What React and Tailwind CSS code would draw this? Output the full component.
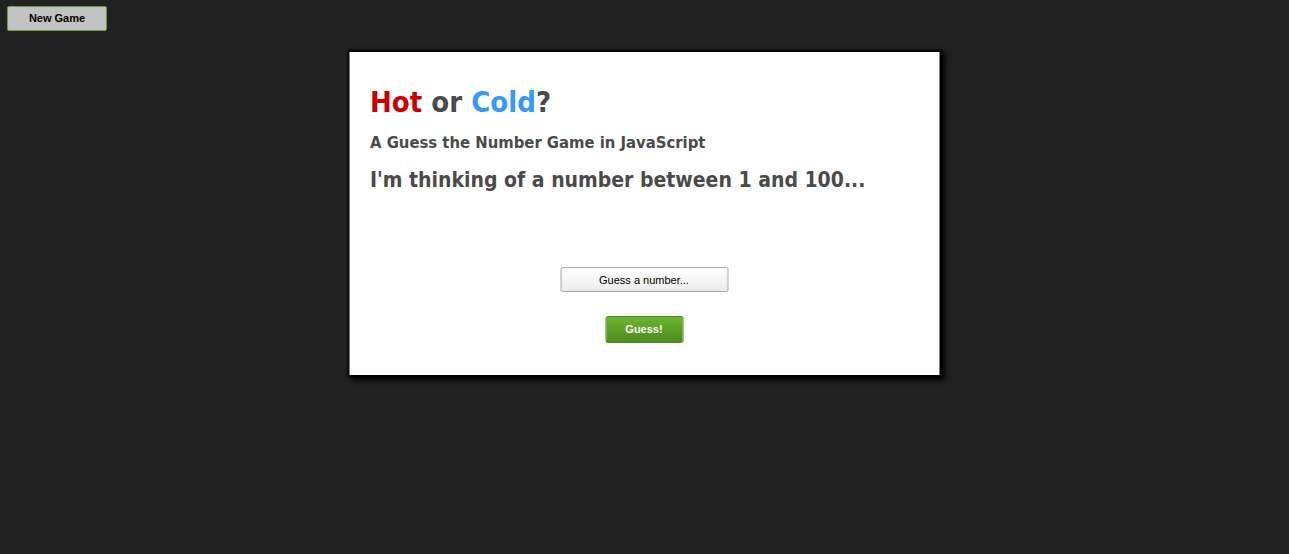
export default function App() {
  return (
    <div className="min-h-screen bg-[#222222]">
      <div className="pt-[6px] pl-[7px]">
        <button className="block h-[25px] w-[100px] rounded-[2px] border border-[#6f9a3a] bg-[#c2c2c2] text-[11px] font-bold text-black [font-family:'Liberation_Sans',Arial,sans-serif]">
          New Game
        </button>
      </div>

      <div className="mx-auto mt-[21px] h-[323px] w-[590px] -translate-x-[0.5px] bg-white px-[21px] pt-[30px] shadow-[0_0_2px_2px_#000,3px_3px_6px_2px_#000] [font-family:'DejaVu_Sans_Condensed','DejaVu_Sans',Verdana,sans-serif]">
        <h1 className="text-[29px] font-bold leading-[40px] text-[#4a4a4a]">
          <span className="text-[#cc0000]">Hot</span> or{' '}
          <span className="text-[#3399ff]">Cold</span>?
        </h1>
        <h2 className="mt-[9px] text-[16.5px] font-bold leading-[24px] text-[#4a4a4a]">
          A Guess the Number Game in JavaScript
        </h2>
        <h3 className="mt-[9px] text-[21px] font-bold leading-[32px] text-[#4a4a4a]">
          I'm thinking of a number between 1 and 100...
        </h3>

        <div className="mt-[71px] flex flex-col items-center">
          <input
            type="text"
            placeholder="Guess a number..."
            className="h-[25px] w-[168px] rounded-[2px] border border-[#a9a9a9] bg-gradient-to-b from-white to-[#ececec] text-center text-[11px] text-black placeholder:text-black shadow-[inset_0_0_2px_rgba(0,0,0,0.1)] [font-family:'Liberation_Sans',Arial,sans-serif]"
          />
          <button className="mt-[24px] h-[27px] w-[78px] rounded-[2px] border border-[#4a8a1c] bg-gradient-to-b from-[#6db52f] to-[#4b8d1d] text-[11px] font-bold text-white [font-family:'Liberation_Sans',Arial,sans-serif]">
            Guess!
          </button>
        </div>
      </div>
    </div>
  );
}
